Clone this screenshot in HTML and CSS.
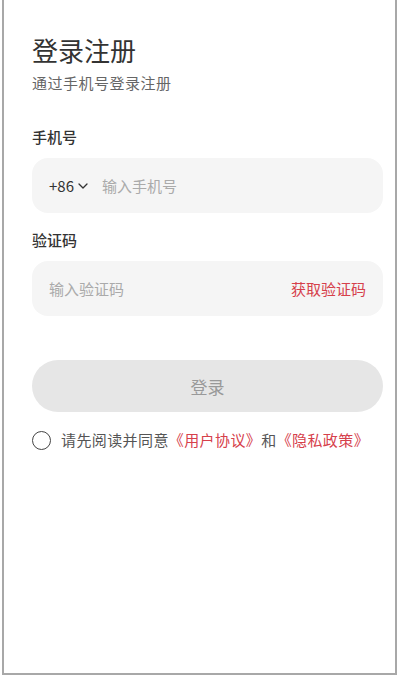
FILE: index.html
```html
<!DOCTYPE html>
<html lang="zh-CN">
<head>
    <meta charset="UTF-8">
    <meta name="viewport" content="width=device-width, initial-scale=1.0">
    <title>登录注册</title>
    <link rel="stylesheet" href="styles.css">
</head>
<body>
    <div class="panel">
        <h1 class="title">登录注册</h1>
        <p class="subtitle">通过手机号登录注册</p>

        <div class="field-label">手机号</div>
        <div class="field">
            <span class="area-code">+86
                <svg class="chevron" width="10" height="6" viewBox="0 0 10 6">
                    <path d="M1 1 L5 5 L9 1" fill="none" stroke="#333" stroke-width="1.3" stroke-linecap="round" stroke-linejoin="round"/>
                </svg>
            </span>
            <span class="placeholder">输入手机号</span>
        </div>

        <div class="field-label second">验证码</div>
        <div class="field">
            <span class="placeholder">输入验证码</span>
            <span class="get-code">获取验证码</span>
        </div>

        <button class="login-btn">登录</button>

        <div class="agree">
            <span class="radio"></span>
            <span>请先阅读并同意<span class="link">《用户协议》</span>和<span class="link">《隐私政策》</span></span>
        </div>
    </div>
</body>
</html>
```

FILE: styles.css
```css
body {
    margin: 0;
    padding: 0;
    background-color: #fff;
    font-family: "Noto Sans CJK SC", "Noto Sans", sans-serif;
    color: #333;
}

.panel {
    box-sizing: border-box;
    width: 395px;
    height: 675px;
    margin-left: 2px;
    padding: 32px 12px 0 28px;
    border: 2px solid #a8a8a8;
    border-top: none;
    background-color: #fff;
}

.title {
    margin: 0;
    font-size: 26px;
    font-weight: 400;
    line-height: 36px;
    color: #333;
}

.subtitle {
    margin: 4px 0 0;
    font-size: 15px;
    line-height: 22px;
    letter-spacing: 0.5px;
    color: #666;
}

.field-label {
    margin-top: 33px;
    font-size: 15px;
    line-height: 20px;
    font-weight: 500;
    color: #333;
}

.field-label.second {
    margin-top: 17px;
}

.field {
    display: flex;
    align-items: center;
    height: 55px;
    margin-top: 11px;
    padding: 0 17px;
    border-radius: 16px;
    background-color: #f5f5f5;
    font-size: 15px;
}

.area-code {
    display: flex;
    align-items: center;
    gap: 4px;
    margin-right: 14px;
    font-size: 15px;
    color: #333;
}

.placeholder {
    color: #aaa;
    flex: 1;
}

.get-code {
    color: #d6404b;
}

.login-btn {
    display: block;
    width: 100%;
    height: 52px;
    margin-top: 44px;
    border: none;
    border-radius: 26px;
    background-color: #e6e6e6;
    color: #999;
    font-family: inherit;
    font-size: 17px;
}

.agree {
    display: flex;
    align-items: center;
    gap: 10px;
    margin-top: 17px;
    font-size: 15px;
    line-height: 22px;
    letter-spacing: 0.4px;
    color: #555;
}

.radio {
    box-sizing: border-box;
    width: 19px;
    height: 19px;
    border: 1.5px solid #444;
    border-radius: 50%;
}

.link {
    color: #d6404b;
}
```
